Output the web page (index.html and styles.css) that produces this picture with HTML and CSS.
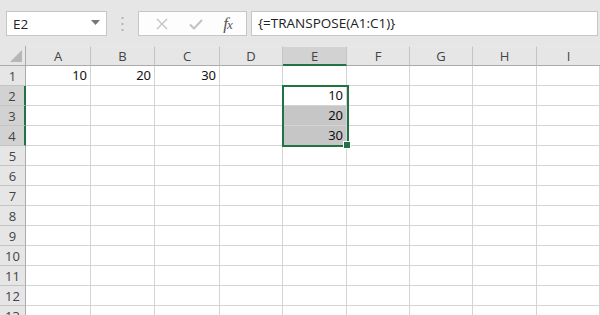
FILE: index.html
```html
<!DOCTYPE html>
<html>
<head>
<meta charset="utf-8">
<link rel="stylesheet" href="styles.css">
</head>
<body>
<div class="app">
  <div class="toolbar">
    <div class="namebox">
      <span class="name">E2</span>
      <svg class="caret" width="9" height="5" viewBox="0 0 9 5"><path d="M0 0H9L4.5 5Z" fill="#777"/></svg>
    </div>
    <div class="sep">
      <svg width="3" height="14" viewBox="0 0 3 14"><rect x="0.5" y="0" width="2" height="2" fill="#b4b4b4"/><rect x="0.5" y="6" width="2" height="2" fill="#b4b4b4"/><rect x="0.5" y="12" width="2" height="2" fill="#b4b4b4"/></svg>
    </div>
    <div class="fxbox">
      <svg class="ico" width="12" height="12" viewBox="0 0 12 12"><path d="M1 1L11 11M11 1L1 11" stroke="#c3c3c3" stroke-width="1.4" fill="none"/></svg>
      <svg class="ico" width="14" height="12" viewBox="0 0 14 12"><path d="M1 6.5L5 10.5L13 2" stroke="#c3c3c3" stroke-width="2" fill="none"/></svg>
      <span class="fx">f<i>x</i></span>
    </div>
    <div class="formula">{=TRANSPOSE(A1:C1)}</div>
  </div>

  <div class="sheet">
    <div class="grid">
      <div class="hd corner"><svg width="12" height="12" viewBox="0 0 12 12"><path d="M12 0V12H0Z" fill="#b6b6b6"/></svg></div>
      <div class="hd col">A</div>
      <div class="hd col">B</div>
      <div class="hd col">C</div>
      <div class="hd col">D</div>
      <div class="hd col sel">E</div>
      <div class="hd col">F</div>
      <div class="hd col">G</div>
      <div class="hd col">H</div>
      <div class="hd col last">I</div>

      <div class="hd row">1</div>
      <div class="c">10</div><div class="c">20</div><div class="c">30</div><div class="c"></div><div class="c"></div><div class="c"></div><div class="c"></div><div class="c"></div><div class="c"></div>

      <div class="hd row sel">2</div>
      <div class="c"></div><div class="c"></div><div class="c"></div><div class="c"></div><div class="c">10</div><div class="c"></div><div class="c"></div><div class="c"></div><div class="c"></div>

      <div class="hd row sel">3</div>
      <div class="c"></div><div class="c"></div><div class="c"></div><div class="c"></div><div class="c hl">20</div><div class="c"></div><div class="c"></div><div class="c"></div><div class="c"></div>

      <div class="hd row sel">4</div>
      <div class="c"></div><div class="c"></div><div class="c"></div><div class="c"></div><div class="c hl">30</div><div class="c"></div><div class="c"></div><div class="c"></div><div class="c"></div>

      <div class="hd row">5</div>
      <div class="c"></div><div class="c"></div><div class="c"></div><div class="c"></div><div class="c"></div><div class="c"></div><div class="c"></div><div class="c"></div><div class="c"></div>
      <div class="hd row">6</div>
      <div class="c"></div><div class="c"></div><div class="c"></div><div class="c"></div><div class="c"></div><div class="c"></div><div class="c"></div><div class="c"></div><div class="c"></div>
      <div class="hd row">7</div>
      <div class="c"></div><div class="c"></div><div class="c"></div><div class="c"></div><div class="c"></div><div class="c"></div><div class="c"></div><div class="c"></div><div class="c"></div>
      <div class="hd row">8</div>
      <div class="c"></div><div class="c"></div><div class="c"></div><div class="c"></div><div class="c"></div><div class="c"></div><div class="c"></div><div class="c"></div><div class="c"></div>
      <div class="hd row">9</div>
      <div class="c"></div><div class="c"></div><div class="c"></div><div class="c"></div><div class="c"></div><div class="c"></div><div class="c"></div><div class="c"></div><div class="c"></div>
      <div class="hd row">10</div>
      <div class="c"></div><div class="c"></div><div class="c"></div><div class="c"></div><div class="c"></div><div class="c"></div><div class="c"></div><div class="c"></div><div class="c"></div>
      <div class="hd row">11</div>
      <div class="c"></div><div class="c"></div><div class="c"></div><div class="c"></div><div class="c"></div><div class="c"></div><div class="c"></div><div class="c"></div><div class="c"></div>
      <div class="hd row">12</div>
      <div class="c"></div><div class="c"></div><div class="c"></div><div class="c"></div><div class="c"></div><div class="c"></div><div class="c"></div><div class="c"></div><div class="c"></div>
      <div class="hd row">13</div>
      <div class="c"></div><div class="c"></div><div class="c"></div><div class="c"></div><div class="c"></div><div class="c"></div><div class="c"></div><div class="c"></div><div class="c"></div>
    </div>
    <div class="selection"><span class="handle"></span></div>
  </div>
</div>
</body>
</html>
```

FILE: styles.css
```css
html, body {
  margin: 0;
  padding: 0;
}
body {
  width: 600px;
  height: 315px;
  overflow: hidden;
  background: #e6e6e6;
  font-family: "Open Sans", "Noto Sans", sans-serif;
}
.app {
  width: 600px;
  height: 315px;
  overflow: hidden;
}
.toolbar {
  height: 46px;
  box-sizing: border-box;
  padding: 11px 2px 0 6px;
  display: flex;
  align-items: flex-start;
  background: #e6e6e6;
}
.namebox {
  width: 101px;
  height: 25px;
  box-sizing: border-box;
  border: 1px solid #c6c6c6;
  background: #fff;
  display: flex;
  align-items: center;
  justify-content: space-between;
  padding: 0 6px 0 6px;
}
.name {
  font-size: 13.5px;
  color: #222;
}
.caret {
  margin-top: -2px;
}
.sep {
  width: 31px;
  height: 25px;
  display: flex;
  align-items: center;
  justify-content: center;
}
.fxbox {
  width: 109px;
  height: 25px;
  box-sizing: border-box;
  border: 1px solid #c6c6c6;
  background: #fdfdfd;
  display: flex;
  align-items: center;
  justify-content: space-around;
  padding: 0 4px 0 7px;
}
.fx {
  font-family: "Liberation Serif", "DejaVu Serif", serif;
  font-style: italic;
  font-size: 17px;
  color: #555;
  letter-spacing: -1px;
}
.fx i {
  font-size: 13px;
}
.formula {
  flex: 1;
  margin-left: 4px;
  height: 25px;
  box-sizing: border-box;
  border: 1px solid #c6c6c6;
  background: #fff;
  font-size: 13.5px;
  line-height: 23px;
  padding-left: 6px;
  color: #222;
}
.sheet {
  position: relative;
  background: #fff;
}
.grid {
  display: grid;
  grid-template-columns: 26px 65px 64px 65px 63px 64px 63px 63px 64px 1fr;
  grid-auto-rows: 20px;
}
.grid > div {
  box-sizing: border-box;
}
.hd {
  background: #e6e6e6;
  color: #444;
  font-size: 13px;
  display: flex;
  align-items: center;
  justify-content: center;
}
.col {
  border-right: 1px solid #c4c4c4;
  border-bottom: 1px solid #ababab;
  border-top: 1px solid #e9e9e9;
}
.col.last {
  border-right: none;
}
.corner {
  border-right: 1px solid #ababab;
  border-bottom: 1px solid #ababab;
  align-items: flex-end;
  justify-content: flex-end;
  padding: 0 3px 3px 0;
}
.row {
  border-right: 1px solid #ababab;
  border-bottom: 1px solid #c4c4c4;
}
.col.sel {
  background: #d2d2d2;
  border-bottom: 2px solid #217346;
}
.row.sel {
  background: #d2d2d2;
  border-right: 2px solid #217346;
}
.c {
  background: #fff;
  border-right: 1px solid #d4d4d4;
  border-bottom: 1px solid #d4d4d4;
  font-family: "Noto Sans", "Open Sans", sans-serif;
  font-size: 13px;
  color: #111;
  text-align: right;
  padding-right: 3px;
  line-height: 19px;
}
.c.hl {
  background: #c6c6c6;
}
.selection {
  position: absolute;
  left: 282px;
  top: 39px;
  width: 67px;
  height: 62px;
  box-sizing: border-box;
  border: 2px solid #217346;
}
.handle {
  position: absolute;
  right: -4px;
  bottom: -4px;
  width: 6px;
  height: 6px;
  background: #217346;
  border: 1px solid #fff;
}
```
